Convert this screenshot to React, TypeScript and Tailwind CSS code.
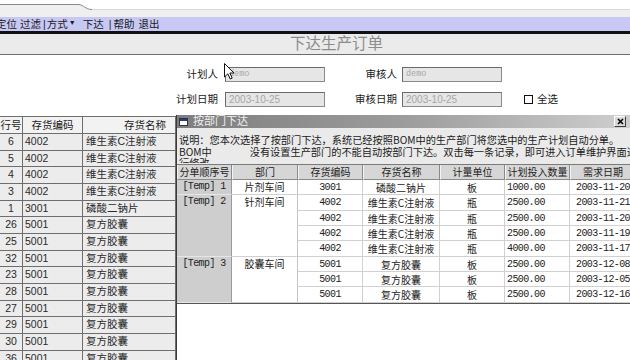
import React from "react";

const LEFT_ROWS = [
  ["6", "4002", "维生素C注射液"],
  ["5", "4002", "维生素C注射液"],
  ["4", "4002", "维生素C注射液"],
  ["3", "4002", "维生素C注射液"],
  ["1", "3001", "磷酸二钠片"],
  ["26", "5001", "复方胶囊"],
  ["25", "5001", "复方胶囊"],
  ["32", "5001", "复方胶囊"],
  ["23", "5001", "复方胶囊"],
  ["28", "5001", "复方胶囊"],
  ["27", "5001", "复方胶囊"],
  ["29", "5001", "复方胶囊"],
  ["30", "5001", "复方胶囊"],
  ["36", "5001", "复方胶囊"],
];

const GROUPS = [
  {
    seq: "[Temp] 1",
    dept: "片剂车间",
    span: "row-span-1",
    items: [["3001", "磷酸二钠片", "板", "1000.00", "2003-11-20"]],
  },
  {
    seq: "[Temp] 2",
    dept: "针剂车间",
    span: "row-span-4",
    items: [
      ["4002", "维生素C注射液", "瓶", "2500.00", "2003-11-21"],
      ["4002", "维生素C注射液", "瓶", "2500.00", "2003-11-20"],
      ["4002", "维生素C注射液", "瓶", "2500.00", "2003-11-19"],
      ["4002", "维生素C注射液", "瓶", "4000.00", "2003-11-17"],
    ],
  },
  {
    seq: "[Temp] 3",
    dept: "胶囊车间",
    span: "row-span-3",
    items: [
      ["5001", "复方胶囊", "板", "2500.00", "2003-12-08"],
      ["5001", "复方胶囊", "板", "2500.00", "2003-12-05"],
      ["5001", "复方胶囊", "板", "2500.00", "2003-12-16"],
    ],
  },
];

const HEADERS = ["分单顺序号", "部门", "存货编码", "存货名称", "计量单位", "计划投入数量", "需求日期"];

const MONO = "font-['Liberation_Mono',monospace] text-[10px] tracking-[-0.6px]";

function Field({ label, value, labelW, gap, small }: { label: string; value: string; labelW: string; gap: string; small?: boolean }) {
  return (
    <>
      <span className={`${labelW} text-right text-[10.5px] leading-[15px] text-[#1a1a1a]`}>{label}</span>
      <div
        className={`${gap} w-[100px] h-[15px] bg-[#e6e6e6] border border-[#6a6a6a] border-b-[#8a8a8a] border-r-[#8a8a8a] pl-[3px] text-[#a6a6a6] ${
          small ? "font-['Liberation_Mono',monospace] text-[8.5px] leading-[13px]" : "text-[10px] leading-[13px]"
        }`}
      >
        {value}
      </div>
    </>
  );
}

export default function App() {
  return (
    <div className="relative w-[630px] h-[360px] overflow-hidden bg-white font-['Liberation_Sans','Noto_Sans_CJK_SC',sans-serif] text-[#1a1a1a]">
      {/* window top edge */}
      <div className="relative h-[17px] bg-white">
        <svg width="630" height="17" viewBox="0 0 630 17" className="absolute left-0 top-0">
          <path d="M0 4.5 H78 C84 4.5 85 9.5 92 9.5 H630 V17 H0 Z" fill="#efefef" />
          <path d="M0 4.5 H78 C84 4.5 85 9.5 92 9.5 H630" fill="none" stroke="#8a8a8a" />
          <path d="M92 9.5 H630" stroke="#d9d9d9" />
        </svg>
      </div>

      {/* menu bar */}
      <div className="h-[14px] bg-[#c8c8f4] flex items-center text-[10.5px] leading-none whitespace-nowrap">
        <span className="-ml-[4px]">定位</span>
        <span className="ml-[3px]">过滤</span>
        <span className="ml-[2px]">|</span>
        <span className="ml-[1px]">方式</span>
        <span className="ml-[1px] text-[7px] -mt-[4px]">▼</span>
        <span className="ml-[7px]">下达</span>
        <span className="ml-[5px]">|</span>
        <span className="ml-[2px]">帮助</span>
        <span className="ml-[4px]">退出</span>
      </div>
      <div className="h-[3px] bg-[#111111]" />

      {/* title band */}
      <div className="h-[21px] bg-[#ebebeb] border-b border-[#6c6c6c] pl-[290px] text-[15.5px] leading-[20px] text-[#8c8c8c]">
        下达生产订单
      </div>

      {/* form */}
      <div className="pt-[12px] pb-[8px] flex flex-col gap-[10px]">
        <div className="flex items-center h-[15px]">
          <Field label="计划人" value="demo" labelW="w-[218px]" gap="ml-[7px]" small />
          <Field label="审核人" value="demo" labelW="w-[72px]" gap="ml-[5px]" small />
        </div>
        <div className="flex items-center h-[15px]">
          <Field label="计划日期" value="2003-10-25" labelW="w-[218px]" gap="ml-[7px]" />
          <Field label="审核日期" value="2003-10-25" labelW="w-[72px]" gap="ml-[5px]" />
          <div className="ml-[22px] w-[9px] h-[9px] border-[1.5px] border-[#111111] bg-white" />
          <span className="ml-[4px] text-[10.5px] leading-[15px]">全选</span>
        </div>
      </div>

      {/* main area */}
      <div className="flex h-[245px]">
        {/* left grid */}
        <div className="w-[176px] pt-[1px] shrink-0">
          <div className="border-t border-[#6e6e6e] border-r border-r-[#6e6e6e] bg-[#ececec]">
            <div className="grid grid-cols-[23px_60px_92px] h-[17px] bg-[#f2f2f2] border-b border-[#6e6e6e] text-[10.5px] leading-[16px]">
              <div className="text-center border-r border-[#6e6e6e]">行号</div>
              <div className="text-center border-r border-[#6e6e6e]">存货编码</div>
              <div className="text-right pr-[9px]">存货名称</div>
            </div>
            {LEFT_ROWS.map((r, i) => (
              <div key={i} className="grid grid-cols-[23px_60px_92px] h-[16.67px] border-b border-[#6e6e6e] text-[10.5px] leading-[15.5px] text-[#2a2a2a]">
                <div className="text-center border-r border-[#6e6e6e]">{r[0]}</div>
                <div className="pl-[2px] border-r border-[#6e6e6e]">{r[1]}</div>
                <div className="pl-[3px]">{r[2]}</div>
              </div>
            ))}
          </div>
        </div>

        {/* dialog */}
        <div className="w-[454px] shrink-0 flex flex-col border-l border-[#3a3a3a] bg-[#eaeaea] overflow-hidden">
          <div className="h-[13px] flex items-center bg-gradient-to-r from-[#7e7e7e] via-[#9c9c9c] to-[#cfcfcf]">
            <svg width="9" height="8" viewBox="0 0 9 8" className="ml-[2px]">
              <rect x="0.5" y="0.5" width="8" height="7" fill="#ffffff" stroke="#333333" />
              <rect x="1" y="1" width="7" height="2" fill="#2a3a8a" />
            </svg>
            <span className="ml-[5px] text-[11px] leading-none text-[#f0f0f0]">按部门下达</span>
            <div className="ml-auto mr-[4px] w-[12px] h-[11px] bg-[#d8d8d8] border border-t-white border-l-white border-b-[#404040] border-r-[#404040] flex items-center justify-center">
              <svg width="7" height="7" viewBox="0 0 7 7">
                <path d="M1 1 L6 6 M6 1 L1 6" stroke="#000000" strokeWidth="1.6" />
              </svg>
            </div>
          </div>

          <div className="h-[35px] mb-[1px] pt-[6px] pl-[2px] overflow-hidden font-['Noto_Sans_CJK_SC',sans-serif] text-[10.2px] leading-[11.5px] text-[#1a1a1a] whitespace-nowrap">
            <div>说明：您本次选择了按部门下达，系统已经按照BOM中的生产部门将您选中的生产计划自动分单。</div>
            <div>
              BOM中<span className="inline-block w-[38px]" />没有设置生产部门的不能自动按部门下达。双击每一条记录，即可进入订单维护界面进
            </div>
            <div>行修改。</div>
          </div>

          <div className="flex-1 bg-white">
            <div className="grid grid-cols-[55px_66px_65px_77px_65px_65px_66px] border-t border-[#7a7a7a] border-b border-b-[#555555] font-['Noto_Sans_CJK_SC',sans-serif] text-[10px] text-[#222222]">
              {HEADERS.map((h) => (
                <div key={h} className="h-[15px] leading-[14px] text-center bg-[#d6d6d6] border-r border-b border-[#8a8a8a] border-l border-l-[#f4f4f4] truncate">
                  {h}
                </div>
              ))}
              {GROUPS.map((g) => (
                <React.Fragment key={g.seq}>
                  <div className={`${g.span} bg-[#cecece] text-center leading-[14px] border-r border-[#9a9a9a] border-b border-b-[#e6e6e6] whitespace-pre ${MONO}`}>{g.seq}</div>
                  <div className={`${g.span} bg-white text-center leading-[14px] border-r border-[#c4c4c4] border-b border-b-[#d0d0d0]`}>{g.dept}</div>
                  {g.items.map((it, j) => (
                    <React.Fragment key={j}>
                      <div className={`h-[15.33px] leading-[15px] text-center border-r border-b border-[#d0d0d0] ${MONO}`}>{it[0]}</div>
                      <div className="h-[15.33px] leading-[15px] text-center border-r border-b border-[#d0d0d0]">{it[1]}</div>
                      <div className="h-[15.33px] leading-[15px] text-center border-r border-b border-[#d0d0d0]">{it[2]}</div>
                      <div className={`h-[15.33px] leading-[15px] pl-[2px] border-r border-b border-[#d0d0d0] ${MONO}`}>{it[3]}</div>
                      <div className={`h-[15.33px] leading-[15px] text-center border-b border-[#d0d0d0] whitespace-nowrap ${MONO}`}>{it[4]}</div>
                    </React.Fragment>
                  ))}
                </React.Fragment>
              ))}
            </div>
          </div>
        </div>
      </div>

      {/* mouse pointer */}
      <svg width="11" height="17" viewBox="0 0 11 17" className="absolute left-[224px] top-[63px]">
        <path d="M0.5 0.5 L0.5 14 L3.8 10.8 L6.2 16 L8.2 15.1 L5.9 10 L10 10 Z" fill="#ffffff" stroke="#111111" strokeWidth="1" />
      </svg>
    </div>
  );
}
